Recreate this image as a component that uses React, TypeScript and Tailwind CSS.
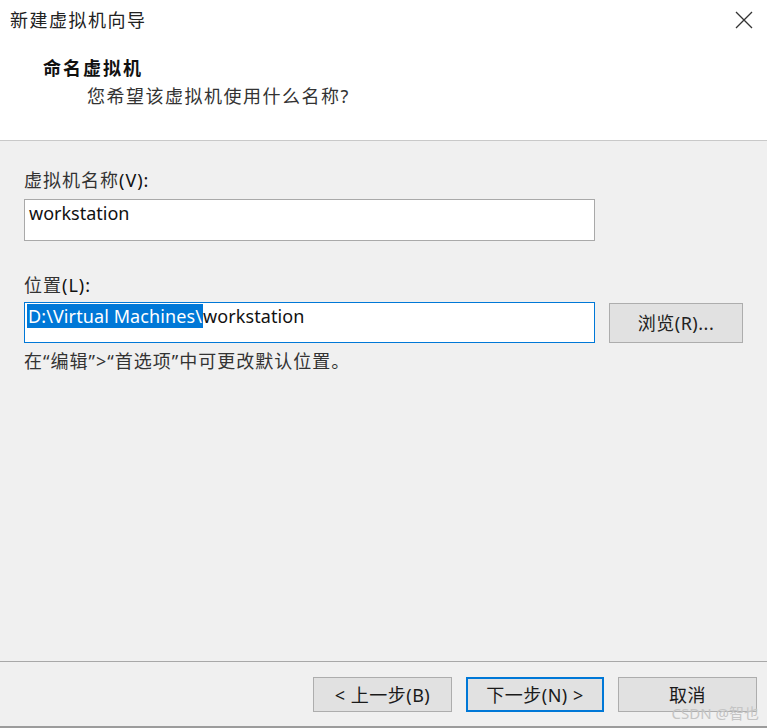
const FONT = "font-['Noto_Sans','Noto_Sans_CJK_SC',sans-serif]"

function WinButton({
  children,
  primary = false,
  width
}: {
  children: React.ReactNode
  primary?: boolean
  width: string
}): React.JSX.Element {
  return (
    <button
      type="button"
      className={
        primary
          ? `${width} flex h-[35px] items-center justify-center border-2 border-[#0078d7] bg-[#e1e1e1] text-[18px] leading-[24px] tracking-[0.5px] text-[#1a1a1a]`
          : `${width} flex h-[35px] items-center justify-center border border-[#adadad] bg-[#e1e1e1] text-[18px] leading-[24px] tracking-[0.5px] text-[#1a1a1a]`
      }
    >
      {children}
    </button>
  )
}

function CloseIcon(): React.JSX.Element {
  return (
    <svg width="18" height="18" viewBox="0 0 18 18" className="mt-[3px]" aria-hidden>
      <path d="M1 1 L17 17 M17 1 L1 17" stroke="#333" strokeWidth="1.3" fill="none" />
    </svg>
  )
}

export default function App(): React.JSX.Element {
  return (
    <div
      className={`${FONT} relative flex h-[728px] w-[767px] flex-col overflow-hidden border-b-2 border-[#9c9c9c] bg-[#f0f0f0] text-[#111]`}
    >
      <header className="h-[141px] shrink-0 border-b border-[#c9c9c9] bg-white">
        <div className="flex items-start justify-between pl-[10px] pr-[14px] pt-[8px]">
          <h1 className="text-[18px] font-normal leading-[24px] tracking-[1.5px] text-[#222]">
            新建虚拟机向导
          </h1>
          <CloseIcon />
        </div>
        <h2 className="ml-[43px] mt-[24px] text-[18px] font-bold leading-[24px] tracking-[2px] text-[#111]">
          命名虚拟机
        </h2>
        <p className="ml-[87px] mt-[4px] text-[18px] leading-[24px] tracking-[1.5px] text-[#333]">
          您希望该虚拟机使用什么名称?
        </p>
      </header>

      <main className="flex-1 px-[24px] pt-[27px]">
        <label className="block text-[18px] leading-[24px] tracking-[1px] text-[#333]">
          虚拟机名称<span className="text-[#111]">(V):</span>
        </label>
        <div className="mt-[7px] h-[42px] w-[571px] border border-[#a9a9a9] bg-white pl-[4px] pt-[2px] text-[18px] leading-[23px] text-[#111]">
          workstation
        </div>

        <label className="mt-[32px] block text-[18px] leading-[24px] tracking-[1px] text-[#333]">
          位置<span className="text-[#111]">(L):</span>
        </label>
        <div className="mt-[5px] flex items-start gap-[14px]">
          <div className="h-[41px] w-[571px] border border-[#0078d7] bg-white pl-[2px] pt-[2px] text-[18px] leading-[23px] tracking-[0.1px] text-[#111]">
            <span className="bg-[#0078d7] pl-[1px] pr-[1px] text-white">D:\Virtual Machines\</span>
            workstation
          </div>
          <button
            type="button"
            className="mt-[1px] flex h-[40px] w-[134px] items-center justify-center border border-[#adadad] bg-[#e1e1e1] text-[18px] leading-[24px] tracking-[0.5px] text-[#222]"
          >
            浏览(R)...
          </button>
        </div>
        <p className="mt-[6px] text-[18px] leading-[24px] tracking-[1px] text-[#333]">
          在“编辑”&gt;“首选项”中可更改默认位置。
        </p>
      </main>

      <footer className="flex h-[65px] shrink-0 items-start justify-end gap-[14px] border-t border-[#a8a8a8] pr-[10px] pt-[15px]">
        <WinButton width="w-[139px]">&lt; 上一步(B)</WinButton>
        <WinButton width="w-[138px]" primary>
          下一步(N) &gt;
        </WinButton>
        <WinButton width="w-[139px]">取消</WinButton>
      </footer>

      <span className="absolute bottom-[3px] right-[8px] text-[15px] leading-[20px] text-[#c4c4c4]">
        CSDN @智也
      </span>
    </div>
  )
}
